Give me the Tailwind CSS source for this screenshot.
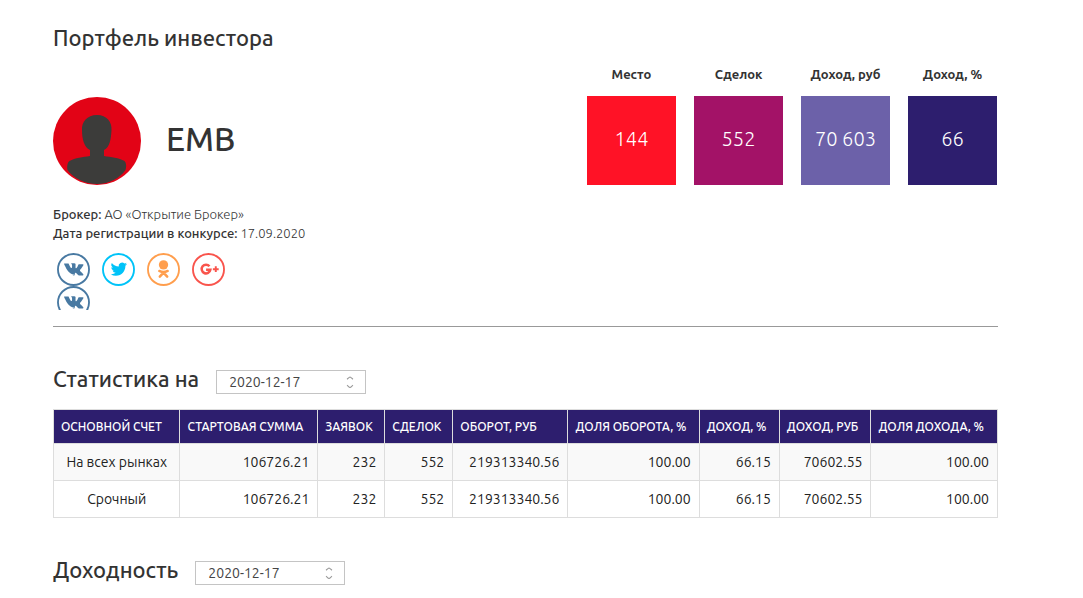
<!DOCTYPE html>
<html lang="ru">
<head>
<meta charset="utf-8">
<meta name="viewport" content="width=device-width, initial-scale=1">
<title>Портфель инвестора</title>
<script src="https://cdn.jsdelivr.net/npm/@tailwindcss/browser@4"></script>
</head>
<body class="bg-white font-['Ubuntu','Noto_Sans',sans-serif] text-[#333]">
<svg class="hidden" aria-hidden="true">
  <symbol id="vk" viewBox="0 0 34 34">
    <circle cx="17" cy="17" r="16" fill="none" stroke="currentColor" stroke-width="1.9"/>
    <path fill="currentColor" transform="translate(0 1)" d="M16 22.3h1.4s.5 0 .6-.3c.2-.2.2-.6.2-.6s0-1.8.8-2.1c.8-.2 1.900 1.800 3 2.500.8.6 1.500.5 1.500.5l2.800 0s1.500-.1.800-1.300c-.1-.1-.4-.8-2.200-2.500-1.800-1.700-1.600-1.400.6-4.300 1.300-1.800 1.900-2.800 1.700-3.300-.2-.4-1.200-.3-1.200-.3h-3.200s-.5 0-.7.300c-.1.200-.5 1.100-.9 1.900-1.100 1.900-1.600 2-1.800 1.900-.4-.3-.3-1.200-.3-1.900 0-2 .3-2.900-.6-3.100-.3-.1-.6-.1-1.300-.1-1 0-1.900 0-2.400.2-.3.200-.6.5-.4.500.2 0 .6.100.8.400.3.400.300 1.200.300 1.200s.2 2.300-.4 2.600c-.4.200-.9-.2-2-2.200-.6-1-1-2.100-1-2.100s-.1-.2-.3-.3c-.2-.2-.5-.2-.5-.2h-3.300s-.500 0-.6.200c-.2.200 0 .6 0 .6s2.400 5.600 5.100 8.400c2.500 2.600 5.300 2.400 5.300 2.400z"/>
  </symbol>
  <symbol id="chev" viewBox="0 0 8 14">
    <path d="M1 4.200C2 3.700 3 2.200 4 2C5 2.200 6 3.700 7 4.200M1 10.300C2 10.800 3 12.300 4 12.500C5 12.300 6 10.800 7 10.300" fill="none" stroke="#999" stroke-width="1.200"/>
  </symbol>
</svg>

<main class="pt-[22px] pr-[85px] pl-[53px]">
  <h1 class="text-[22px] leading-8 font-medium">Портфель инвестора</h1>

  <section class="mt-[10px] flex items-end justify-between pr-px">
    <div class="flex items-center gap-[25px]">
      <svg class="size-[88px]" viewBox="0 0 88 88" role="img" aria-label="Аватар">
        <defs><clipPath id="round"><circle cx="44" cy="44" r="43.500"/></clipPath></defs>
        <circle cx="44" cy="44" r="44" fill="#e20316"/>
        <path clip-path="url(#round)" fill="#3c3c3a" d="M44 18C34 18 28.500 25 29 33C29 42 31 50 37 53V59C30 60 22 61 16.500 64C14 66 14 70 14.500 73C20 81 32 87 44 87C56 87 67 81 72.500 73C73.500 70 73.500 66 71.500 64C66 61 58 60 51 59V53C57 50 58 42 58.500 33C59 25 54 18 44 18Z"/>
      </svg>
      <h2 class="pb-1 text-[33px] leading-10 font-medium">EMB</h2>
    </div>
    <dl class="flex gap-[18px] text-center">
      <div class="w-[89px]">
        <dt class="text-[13px] leading-5 font-bold whitespace-nowrap">Место</dt>
        <dd class="mt-3 flex h-[89px] items-center justify-center bg-[#ff1226] pb-1 text-xl font-light text-white">144</dd>
      </div>
      <div class="w-[89px]">
        <dt class="text-[13px] leading-5 font-bold whitespace-nowrap">Сделок</dt>
        <dd class="mt-3 flex h-[89px] items-center justify-center bg-[#a31267] pb-1 text-xl font-light text-white">552</dd>
      </div>
      <div class="w-[89px]">
        <dt class="text-[13px] leading-5 font-bold whitespace-nowrap">Доход, руб</dt>
        <dd class="mt-3 flex h-[89px] items-center justify-center bg-[#6c61a9] pb-1 text-xl font-light whitespace-nowrap text-white">70 603</dd>
      </div>
      <div class="w-[89px]">
        <dt class="text-[13px] leading-5 font-bold whitespace-nowrap">Доход, %</dt>
        <dd class="mt-3 flex h-[89px] items-center justify-center bg-[#2d1e6e] pb-1 text-xl font-light text-white">66</dd>
      </div>
    </dl>
  </section>

  <div class="mt-5 text-[13px] leading-[19px] font-light">
    <p><b class="font-medium">Брокер:</b> АО «Открытие Брокер»</p>
    <p><b class="font-medium">Дата регистрации в конкурсе:</b> 17.09.2020</p>
  </div>

  <nav class="mt-[10px] h-[57px] overflow-hidden pl-1" aria-label="Поделиться">
    <div class="flex gap-3">
      <a href="#" aria-label="ВКонтакте" class="text-[#4879a2]"><svg class="size-[33px]"><use href="#vk"/></svg></a>
      <a href="#" aria-label="Twitter" class="text-[#00c3f8]"><svg class="size-[33px]" viewBox="0 0 34 34"><circle cx="17" cy="17" r="16" fill="none" stroke="currentColor" stroke-width="1.900"/><path fill="currentColor" transform="translate(9 8.200) scale(.7)" d="M23.950 4.570a10 10 0 0 1-2.820.77 4.960 4.960 0 0 0 2.160-2.720c-.95.55-2 .96-3.130 1.180a4.920 4.920 0 0 0-8.380 4.480C7.690 8.090 4.070 6.130 1.640 3.160a4.920 4.920 0 0 0 1.520 6.570 4.900 4.900 0 0 1-2.230-.61v.06a4.920 4.920 0 0 0 3.950 4.830 5 5 0 0 1-2.210.08 4.940 4.940 0 0 0 4.600 3.420A9.870 9.870 0 0 1 0 19.540a14 14 0 0 0 7.550 2.210c9.050 0 14-7.500 14-13.990 0-.21 0-.42-.02-.63a9.900 9.900 0 0 0 2.420-2.560z"/></svg></a>
      <a href="#" aria-label="Одноклассники" class="text-[#ff9e4d]"><svg class="size-[33px]" viewBox="0 0 34 34"><circle cx="17" cy="17" r="16" fill="none" stroke="currentColor" stroke-width="1.900"/><circle cx="17" cy="12.200" r="4.800" fill="currentColor"/><path d="M12.700 18.500Q17 20.700 21.300 18.500M17 20.200L13.200 24.400M17 20.200L20.800 24.400" fill="none" stroke="currentColor" stroke-width="2.600" stroke-linecap="round"/></svg></a>
      <a href="#" aria-label="Google+" class="text-[#f9544c]"><svg class="size-[33px]" viewBox="0 0 34 34"><circle cx="17" cy="17" r="16" fill="none" stroke="currentColor" stroke-width="1.900"/><path d="M18 13.700A4.500 4.500 0 1 0 18.900 17.300H14.500" fill="none" stroke="currentColor" stroke-width="2.600"/><path d="M21.500 16.700H27.500M24.500 13.700V19.700" fill="none" stroke="currentColor" stroke-width="2"/></svg></a>
    </div>
    <a href="#" aria-label="ВКонтакте" class="block text-[#4879a2]"><svg class="size-[33px]"><use href="#vk"/></svg></a>
  </nav>

  <hr class="mt-4 border-[#999]">

  <div class="mt-9 flex items-center gap-[17px]">
    <h2 class="text-[22px] leading-8 font-medium"><label for="stat">Статистика на</label></h2>
    <div class="relative mt-1.5">
      <select id="stat" class="block h-6 w-[150px] appearance-none border border-[#c4c4c4] bg-white pl-3 text-sm leading-5 text-[#444]"><option>2020-12-17</option></select>
      <svg class="pointer-events-none absolute top-[5px] right-3 h-[14px] w-2"><use href="#chev"/></svg>
    </div>
  </div>

  <table class="mt-[14px] w-full table-fixed border-collapse text-right text-sm text-[#222]">
    <colgroup>
      <col class="w-[13.4%]"><col class="w-[14.6%]"><col class="w-[7.1%]"><col class="w-[7.2%]"><col class="w-[12.2%]"><col class="w-[13.9%]"><col class="w-[8.5%]"><col class="w-[9.7%]"><col>
    </colgroup>
    <thead class="bg-[#2d1e6e] text-left text-xs whitespace-nowrap text-white uppercase">
      <tr class="h-[34px] *:border *:border-[#ddd] *:px-[7px] *:font-medium">
        <th scope="col">Основной счет</th><th scope="col">Стартовая сумма</th><th scope="col">Заявок</th><th scope="col">Сделок</th><th scope="col">Оборот, руб</th><th scope="col">Доля оборота, %</th><th scope="col">Доход, %</th><th scope="col">Доход, руб</th><th scope="col">Доля дохода, %</th>
      </tr>
    </thead>
    <tbody>
      <tr class="h-[37px] bg-[#f9f9f9] *:border *:border-[#ddd] *:px-2">
        <td class="text-center whitespace-nowrap">На всех рынках</td><td>106726.21</td><td>232</td><td>552</td><td>219313340.56</td><td>100.00</td><td>66.15</td><td>70602.55</td><td>100.00</td>
      </tr>
      <tr class="h-[37px] *:border *:border-[#ddd] *:px-2">
        <td class="text-center">Срочный</td><td>106726.21</td><td>232</td><td>552</td><td>219313340.56</td><td>100.00</td><td>66.15</td><td>70602.55</td><td>100.00</td>
      </tr>
    </tbody>
  </table>

  <div class="mt-9 flex items-center gap-[17px]">
    <h2 class="text-[22px] leading-8 font-medium"><label for="yield">Доходность</label></h2>
    <div class="relative mt-1.5">
      <select id="yield" class="block h-6 w-[150px] appearance-none border border-[#c4c4c4] bg-white pl-3 text-sm leading-5 text-[#444]"><option>2020-12-17</option></select>
      <svg class="pointer-events-none absolute top-[5px] right-3 h-[14px] w-2"><use href="#chev"/></svg>
    </div>
  </div>
</main>
</body>
</html>
